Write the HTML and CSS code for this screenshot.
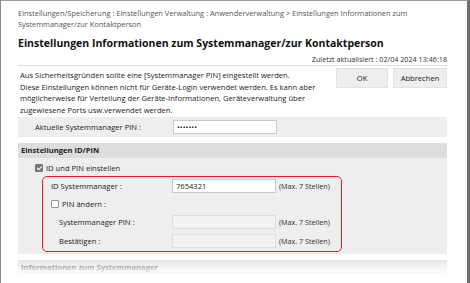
FILE: index.html
```html
<!DOCTYPE html>
<html lang="de">
<head>
  <meta charset="UTF-8">
  <title>Einstellungen Informationen zum Systemmanager/zur Kontaktperson</title>
  <link rel="stylesheet" href="styles.css">
</head>
<body>
  <div class="window">
    <div class="page">
      <div class="crumbs">Einstellungen/Speicherung : Einstellungen Verwaltung : Anwenderverwaltung &gt; Einstellungen Informationen zum<br>Systemmanager/zur Kontaktperson</div>
      <h1>Einstellungen Informationen zum Systemmanager/zur Kontaktperson</h1>
      <div class="updated">Zuletzt aktualisiert : 02/04 2024 13:46:18</div>

      <div class="intro">
        <p>Aus Sicherheitsgründen sollte eine [Systemmanager PIN] eingestellt werden.<br>
        Diese Einstellungen können nicht für Geräte-Login verwendet werden. Es kann aber<br>
        möglicherweise für Verteilung der Geräte-Informationen, Geräteverwaltung über<br>
        zugewiesene Ports usw.verwendet werden.</p>
        <div class="actions">
          <button type="button">OK</button>
          <button type="button">Abbrechen</button>
        </div>
      </div>

      <div class="row current">
        <label>Aktuelle Systemmanager PIN :</label>
        <input type="password" value="1234567">
      </div>

      <div class="section">
        <div class="section-head">Einstellungen ID/PIN</div>
        <div class="section-body">
          <label class="check"><span class="box on"></span>ID und PIN einstellen</label>
          <div class="highlight">
            <div class="row first">
              <label>ID Systemmanager :</label>
              <input type="text" value="7654321">
              <span class="hint">(Max. 7 Stellen)</span>
            </div>
            <label class="check"><span class="box"></span>PIN ändern :</label>
            <div class="row sub">
              <label>Systemmanager PIN :</label>
              <input type="password" disabled>
              <span class="hint">(Max. 7 Stellen)</span>
            </div>
            <div class="row sub">
              <label>Bestätigen :</label>
              <input type="password" disabled>
              <span class="hint">(Max. 7 Stellen)</span>
            </div>
          </div>
        </div>
      </div>

      <div class="section">
        <div class="section-head">Informationen zum Systemmanager</div>
        <div class="row plain">
          <label></label>
          <input type="text">
        </div>
      </div>
    </div>
    <div class="fade"></div>
  </div>
</body>
</html>
```

FILE: styles.css
```css
* {
  margin: 0;
  padding: 0;
  box-sizing: border-box;
}
html, body {
  width: 100%;
  height: 100%;
  overflow: hidden;
  background: #fff;
}
body {
  font-family: 'Open Sans', sans-serif;
  font-size: 7.6px;
  color: #222;
}
.window {
  position: relative;
  height: 100%;
  width: 470px;
  border-top: 1px solid #9a9a9a;
  border-left: 1px solid #8a8a8a;
  border-right: 3px solid #6e6e6e;
}
.page {
  padding: 7px 20px 0 17px;
}
.crumbs {
  color: #555;
  font-size: 7.45px;
  line-height: 11px;
  white-space: nowrap;
}
h1 {
  font-size: 10.5px;
  font-weight: 700;
  color: #111;
  margin-top: 5px;
  line-height: 16px;
}
.updated {
  text-align: right;
  font-size: 7.2px;
  line-height: 10px;
  color: #333;
  margin-top: 3px;
  padding-bottom: 1px;
  border-bottom: 1px solid #ddd;
}
.intro {
  display: flex;
  justify-content: space-between;
  padding: 2px 0 0 2px;
}
.intro p {
  margin-top: 2px;
  line-height: 11.7px;
  white-space: nowrap;
  color: #222;
}
.actions {
  display: flex;
  gap: 5px;
}
button {
  font-family: inherit;
  font-size: 7.6px;
  height: 20px;
  background: #eee;
  border: 1px solid #e2e2e2;
  color: #222;
  width: 52px;
}
button + button {
  width: 54px;
}
.row {
  display: flex;
  align-items: center;
  height: 20px;
}
.row label {
  width: 155px;
  padding-left: 17px;
}
.current {
  background: #eee;
}
input {
  width: 104px;
  height: 14px;
  border: 1px solid #c8c8c8;
  background: #fff;
  font-family: inherit;
  font-size: 7.6px;
  padding: 0 3px;
  color: #222;
}
input:disabled {
  background: #f2f2f2;
  border-color: #ddd;
}
.hint {
  margin-left: 3px;
  color: #333;
  font-size: 7.2px;
}
.section {
  margin-top: 6px;
}
.section-head {
  background: #ddd;
  font-weight: 700;
  padding: 0 3px;
  height: 15px;
  line-height: 15px;
  color: #222;
}
.section-body {
  background: #eee;
  padding: 4px 0 2px 17px;
}
.check {
  display: flex;
  align-items: center;
  height: 12px;
}
.box {
  width: 8px;
  height: 8px;
  border: 1px solid #999;
  background: #fff;
  margin-right: 3px;
  border-radius: 1px;
  position: relative;
}
.box.on {
  background: #777;
  border-color: #777;
}
.box.on::after {
  content: "";
  position: absolute;
  left: 2px;
  top: 0;
  width: 2px;
  height: 4px;
  border: solid #fff;
  border-width: 0 1.2px 1.2px 0;
  transform: rotate(45deg);
}
.highlight {
  margin: 2px 0 0 7px;
  width: 300px;
  border: 1.5px solid #f01c24;
  border-radius: 5px;
  padding: 0 0 0 8px;
}
.highlight .row label {
  width: 121px;
  padding-left: 0;
}
.highlight .row.first {
  height: 18px;
}
.highlight .check {
  height: 18px;
}
.highlight .row.sub {
  height: 19px;
}
.highlight .row.sub label {
  padding-left: 8px;
}
.plain {
  margin-top: 2px;
}
.fade {
  position: absolute;
  left: 0;
  right: 0;
  bottom: 0;
  height: 28px;
  background: linear-gradient(to bottom, rgba(255,255,255,0), rgba(255,255,255,0.8) 55%, #fff);
}
```
